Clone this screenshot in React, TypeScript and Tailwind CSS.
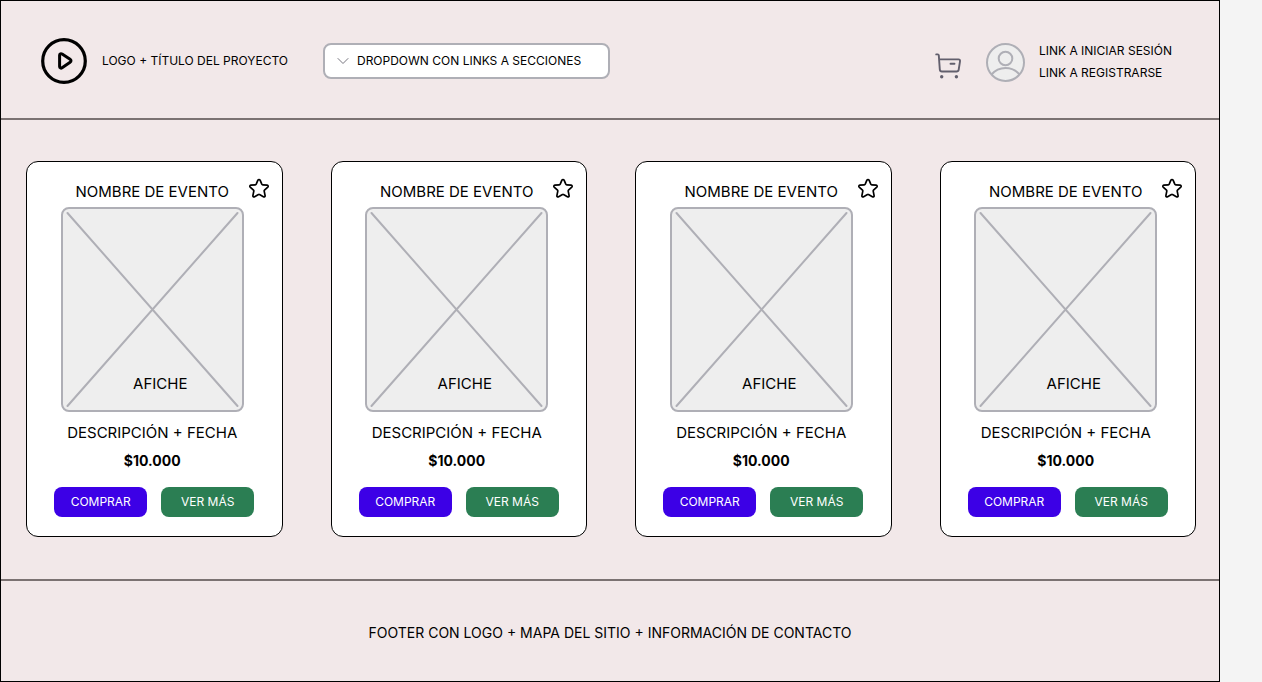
import React from "react";

const events = [1, 2, 3, 4];

function PlayLogo() {
  return (
    <svg viewBox="0 0 46 46" className="size-[46px] shrink-0" fill="none" stroke="#000" aria-hidden="true">
      <circle cx="23" cy="23" r="21.3" strokeWidth="3.2" />
      <path
        d="M18.6 17.2c0-1.4 1.4-1.9 2.5-1.2l8 5.3c1.2.8 1.2 2.2 0 3l-8 5.5c-1.1.7-2.5.2-2.5-1.2z"
        strokeWidth="3"
        strokeLinejoin="round"
      />
    </svg>
  );
}

function CartIcon() {
  return (
    <svg viewBox="0 0 28 28" className="size-7" fill="none" stroke="#625f6d" strokeWidth="1.9" strokeLinecap="round" strokeLinejoin="round" aria-hidden="true">
      <path d="M2.2 2.400h1.600c.6 0 .9.400 1 1L5.800 17.500c.1 1.300.9 2 2.100 2h14.700c1.200 0 1.900-.7 2.100-1.900l1.300-8.300c.2-1.200-.4-1.900-1.500-1.900H5.200" />
      <path d="M16.500 11.800h4" />
      <g fill="#625f6d" stroke="none">
        <circle cx="7.700" cy="24.800" r="1.700" />
        <circle cx="22.400" cy="24.800" r="1.700" />
      </g>
    </svg>
  );
}

function AvatarIcon() {
  return (
    <svg viewBox="0 0 39 39" className="size-[39px] shrink-0" fill="none" stroke="#afafb6" strokeWidth="2" aria-hidden="true">
      <circle cx="19.500" cy="19.500" r="18.500" fill="#eeeeee" />
      <circle cx="19.500" cy="15.500" r="6.800" />
      <path d="M5.500 31.500c3.600-4.400 8.500-6.600 14-6.600s10.400 2.200 14 6.600" />
    </svg>
  );
}

function StarIcon() {
  return (
    <svg viewBox="0 0 22 22" className="size-[22px]" fill="none" stroke="#000" strokeWidth="1.700" strokeLinejoin="round" aria-hidden="true">
      <path d="M9.900 2.200c.5-.9 1.700-.9 2.200 0l1.700 4c.2.400.5.600.9.600l4.500.4c1 .1 1.300 1.200.6 1.900l-3.300 3c-.3.300-.4.700-.3 1.100l.9 4.400c.2 1-.8 1.700-1.700 1.200l-3.900-2.200c-.3-.2-.7-.2-1 0l-3.900 2.200c-.9.500-1.900-.2-1.700-1.200l.9-4.400c.1-.4 0-.8-.3-1.100l-3.300-3c-.7-.7-.4-1.800.6-1.900l4.500-.4c.4 0 .7-.2.900-.6z" />
    </svg>
  );
}

function Poster() {
  return (
    <div className="relative flex h-[205px] w-[183px] items-end justify-center rounded-lg border-2 border-[#afafb6] bg-[#eeeeee] pb-4 pl-4">
      <svg viewBox="0 0 179 201" preserveAspectRatio="none" className="absolute inset-0 size-full" fill="none" stroke="#afafb6" strokeWidth="2" strokeLinecap="round" aria-hidden="true">
        <path d="M4.500 4 174.500 197M174.500 4 4.500 197" />
      </svg>
      <span className="relative text-[15px] leading-5">AFICHE</span>
    </div>
  );
}

function EventCard() {
  return (
    <article className="relative flex flex-col items-center rounded-xl border border-black bg-white pt-5 pb-[19px] pr-1">
      <h2 className="text-[15px] leading-5">NOMBRE DE EVENTO</h2>
      <button type="button" aria-label="Favorito" className="absolute top-4 right-3">
        <StarIcon />
      </button>
      <div className="mt-[5px]">
        <Poster />
      </div>
      <p className="mt-[11px] text-[15px] leading-5">DESCRIPCIÓN + FECHA</p>
      <p className="mt-2 text-sm leading-5 font-bold">$10.000</p>
      <div className="mt-4 flex gap-3.5 pl-1">
        <button type="button" className="h-[30px] w-[93px] rounded-lg bg-[#3c00e6] text-xs text-white">
          COMPRAR
        </button>
        <button type="button" className="h-[30px] w-[93px] rounded-lg bg-[#2b7e53] text-xs text-white">
          VER MÁS
        </button>
      </div>
    </article>
  );
}

export default function App() {
  return (
    <div className="min-h-screen bg-[#f4f4f4] pr-[42px] font-['Inter','Liberation_Sans',sans-serif] text-black">
      <div className="flex min-h-screen flex-col border border-black bg-[#f2e8e9]">
        <header className="flex items-start justify-between border-b-2 border-[#7b7272] pt-[37px] pr-[47px] pb-[34px] pl-10">
          <div className="flex items-center">
            <a href="#" className="flex items-center gap-[15px] text-xs">
              <PlayLogo />
              LOGO + TÍTULO DEL PROYECTO
            </a>
            <div className="relative ml-[35px]">
              <select
                aria-label="DROPDOWN CON LINKS A SECCIONES"
                className="block h-9 w-[287px] appearance-none rounded-lg border-2 border-[#afafb6] bg-white pl-8 text-xs"
              >
                <option>DROPDOWN CON LINKS A SECCIONES</option>
              </select>
              <svg viewBox="0 0 12 8" className="pointer-events-none absolute top-3.5 left-3.5 h-2 w-3" fill="none" stroke="#77757f" aria-hidden="true">
                <path d="m1 1.500 5 5 5-5" strokeLinecap="round" />
              </svg>
            </div>
          </div>
          <div className="flex items-center pt-0.5">
            <a href="#" aria-label="Carrito" className="mt-2">
              <CartIcon />
            </a>
            <div className="ml-6 flex items-center gap-3.5">
              <AvatarIcon />
              <nav className="flex flex-col text-xs leading-[22px]">
                <a href="#">LINK A INICIAR SESIÓN</a>
                <a href="#">LINK A REGISTRARSE</a>
              </nav>
            </div>
          </div>
        </header>
        <main className="grid flex-1 grid-cols-4 items-start gap-12 pt-[41px] pr-[23px] pb-[42px] pl-[25px]">
          {events.map((id) => (
            <EventCard key={id} />
          ))}
        </main>
        <footer className="flex h-[102px] items-center justify-center border-t-2 border-[#7b7272] pt-1 text-sm">
          FOOTER CON LOGO + MAPA DEL SITIO + INFORMACIÓN DE CONTACTO
        </footer>
      </div>
    </div>
  );
}
